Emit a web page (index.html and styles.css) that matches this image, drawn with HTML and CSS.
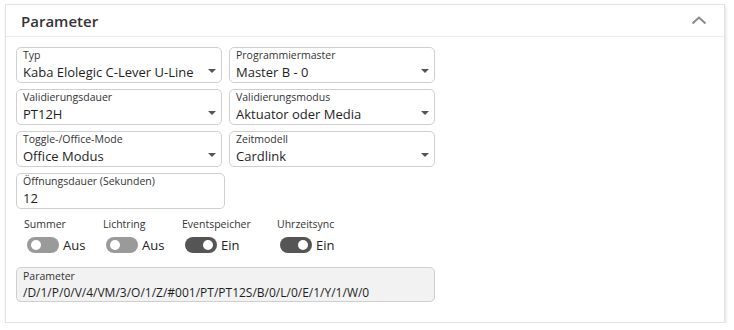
FILE: index.html
```html
<!DOCTYPE html>
<html lang="de">
<head>
    <meta charset="UTF-8">
    <title>Parameter</title>
    <link rel="stylesheet" href="styles.css">
</head>
<body>
    <div class="card">
        <header class="card-header">
            <span class="card-title">Parameter</span>
            <svg class="collapse-icon" width="16" height="10" viewBox="0 0 16 10">
                <polyline points="1.5,8.5 8,2.5 14.5,8.5" fill="none" stroke="#8a8a8a" stroke-width="2"/>
            </svg>
        </header>
        <div class="card-body">
            <div class="field-grid">
                <div class="field select">
                    <label>Typ</label>
                    <div class="value">Kaba Elolegic C-Lever U-Line</div>
                </div>
                <div class="field select">
                    <label>Programmiermaster</label>
                    <div class="value">Master B - 0</div>
                </div>
                <div class="field select">
                    <label>Validierungsdauer</label>
                    <div class="value">PT12H</div>
                </div>
                <div class="field select">
                    <label>Validierungsmodus</label>
                    <div class="value">Aktuator oder Media</div>
                </div>
                <div class="field select">
                    <label>Toggle-/Office-Mode</label>
                    <div class="value">Office Modus</div>
                </div>
                <div class="field select">
                    <label>Zeitmodell</label>
                    <div class="value">Cardlink</div>
                </div>
                <div class="field wide">
                    <label>Öffnungsdauer (Sekunden)</label>
                    <div class="value">12</div>
                </div>
            </div>

            <div class="switches">
                <div class="switch-item">
                    <span class="switch-label">Summer</span>
                    <div class="switch-row">
                        <span class="toggle"></span>Aus
                    </div>
                </div>
                <div class="switch-item">
                    <span class="switch-label">Lichtring</span>
                    <div class="switch-row">
                        <span class="toggle"></span>Aus
                    </div>
                </div>
                <div class="switch-item w-event">
                    <span class="switch-label">Eventspeicher</span>
                    <div class="switch-row">
                        <span class="toggle on"></span>Ein
                    </div>
                </div>
                <div class="switch-item">
                    <span class="switch-label">Uhrzeitsync</span>
                    <div class="switch-row">
                        <span class="toggle on"></span>Ein
                    </div>
                </div>
            </div>

            <div class="field readonly">
                <label>Parameter</label>
                <div class="value">/D/1/P/0/V/4/VM/3/O/1/Z/#001/PT/PT12S/B/0/L/0/E/1/Y/1/W/0</div>
            </div>
        </div>
    </div>
</body>
</html>
```

FILE: styles.css
```css
body {
    margin: 0;
    padding: 4px 0 0 5px;
    background-color: #fff;
    font-family: "Open Sans", Arial, sans-serif;
    color: #222;
}
.card {
    width: 718px;
    height: 317px;
    border: 1px solid #e2e2e2;
    box-shadow: 1px 2px 3px rgba(0, 0, 0, 0.12);
    background-color: #fff;
}
.card-header {
    height: 31px;
    border-bottom: 1px solid #ececec;
    display: flex;
    align-items: center;
    justify-content: space-between;
    padding: 0 17px 0 15px;
}
.card-title {
    font-size: 15px;
    font-weight: 600;
    color: #333;
}
.collapse-icon {
    margin-top: -1px;
}
.card-body {
    padding: 10px 10px;
}
.field-grid {
    display: grid;
    grid-template-columns: 206px 206px;
    column-gap: 7px;
    row-gap: 6px;
}
.field {
    position: relative;
    border: 1px solid #cfcfcf;
    border-radius: 5px;
    padding: 0 6px;
    box-sizing: border-box;
}
.field-grid .field {
    height: 36px;
}
.field-grid .wide {
    width: 209px;
}
.field label {
    display: block;
    font-size: 10.5px;
    line-height: 15px;
    color: #333;
}
.field .value {
    font-size: 13px;
    line-height: 18px;
    color: #1e1e1e;
}
.select::after {
    content: "";
    position: absolute;
    right: 5px;
    top: 21px;
    border-left: 4px solid transparent;
    border-right: 4px solid transparent;
    border-top: 4px solid #555;
}
.switches {
    display: flex;
    padding: 8px 0 0 8px;
    height: 50px;
    box-sizing: border-box;
}
.switch-item {
    display: flex;
    flex-direction: column;
    width: 79px;
}
.w-event {
    width: 95px;
}
.switch-label {
    font-size: 10.5px;
    line-height: 15px;
    color: #333;
}
.switch-row {
    display: flex;
    align-items: center;
    gap: 4px;
    margin-top: 4px;
    padding-left: 3px;
    font-size: 13px;
    color: #222;
}
.toggle {
    width: 32px;
    height: 16px;
    border-radius: 8px;
    background-color: #9a9a9a;
    position: relative;
}
.toggle::after {
    content: "";
    position: absolute;
    top: 3px;
    left: 4px;
    width: 10px;
    height: 10px;
    border-radius: 50%;
    background-color: #fff;
}
.toggle.on {
    background-color: #555;
}
.toggle.on::after {
    left: auto;
    right: 4px;
}
.readonly {
    width: 419px;
    height: 35px;
    margin-top: 8px;
    background-color: #f2f2f2;
    padding: 1px 6px;
}
.readonly .value {
    font-size: 12px;
}
```
